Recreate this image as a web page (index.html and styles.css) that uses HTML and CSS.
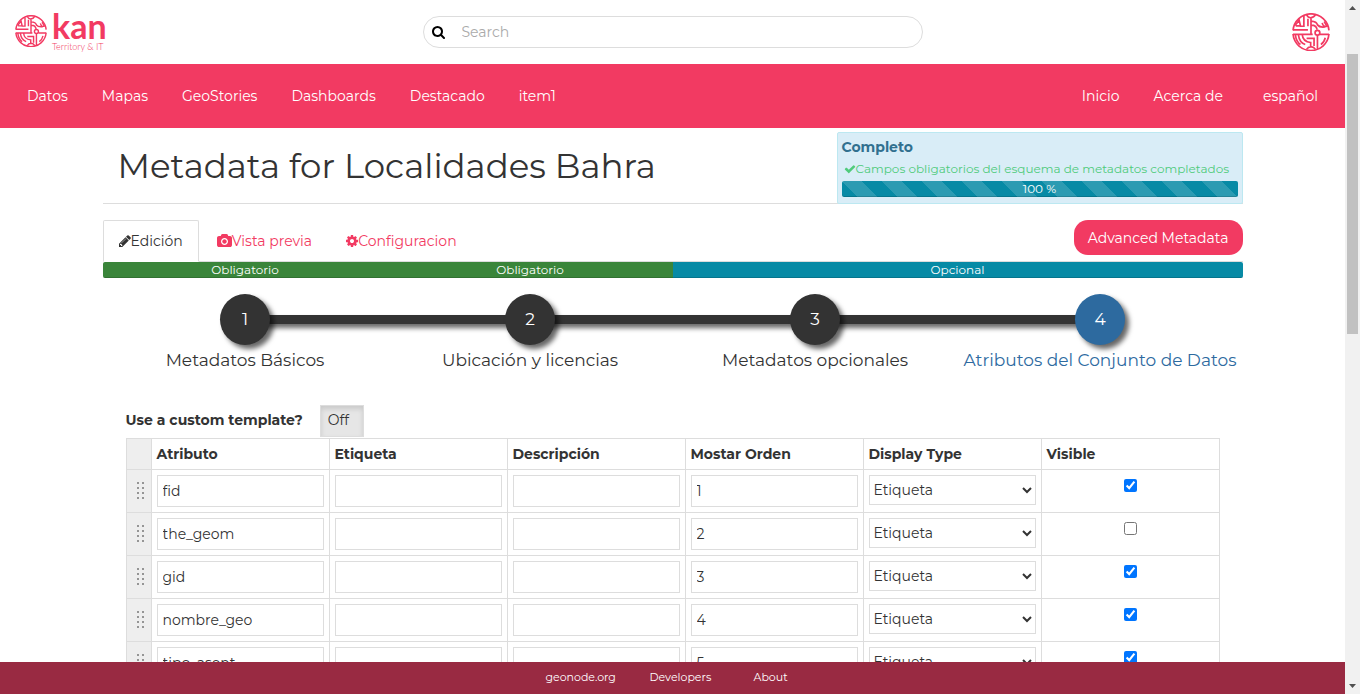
FILE: index.html
```html
<!DOCTYPE html>
<html lang="es">
<head>
<meta charset="utf-8">
<title>Metadata for Localidades Bahra</title>
<link rel="stylesheet" href="styles.css">
</head>
<body>
<svg class="defs" aria-hidden="true">
  <symbol id="emblem" viewBox="-1 -1 112 112">
    <g fill="none" stroke="currentColor" stroke-width="5">
      <path d="M2 50A53.200 53.200 0 0 1 108 50M2 61A53.200 53.200 0 0 0 108 61"/>
      <path d="M2 49H46M8 36L20 20L24 37H10M34 8V38H22M46 16V38"/>
      <path d="M42 4Q46 13 54 13Q64 12 68 4M55 13V30M55 23Q72 24 74 34Q80 42 96 40M55 30V62M55 35Q70 34 73 48M88 28Q91 42 102 38L94 24"/>
      <circle cx="74" cy="57" r="7"/>
      <path d="M81 62H108M74 64V106M2 62H60M29 62Q31 84 54 86V98M42 74H64V96M18 64Q21 86 38 92M9 64Q12 84 24 92M42 106Q46 99 55 98Q64 99 68 106M54 86V98M84 92Q94 86 97 72"/>
    </g>
  </symbol>
</svg>
<div class="page">
  <header class="topbar">
    <a class="brand" href="#" aria-label="kan Territory &amp; IT">
      <svg class="brand-mark"><use href="#emblem"/></svg>
      <span class="brand-text"><span class="brand-name">kan</span><span class="brand-sub">Territory &amp; IT</span></span>
    </a>
    <form class="search">
      <button type="button" class="search-btn" aria-label="Search"><svg class="icon" viewBox="0 0 1792 1792"><path d="M1152 832q0-185-131.5-316.5t-316.5-131.5-316.5 131.5-131.5 316.5 131.5 316.5 316.5 131.5 316.5-131.5 131.5-316.5zm512 832q0 52-38 90t-90 38q-54 0-90-38l-343-342q-179 124-399 124-143 0-273.5-55.5t-225-150-150-225-55.5-273.5 55.5-273.5 150-225 225-150 273.5-55.5 273.5 55.5 225 150 150 225 55.5 273.5q0 220-124 399l343 343q37 37 37 90z"/></svg></button>
      <input class="search-input" type="text" placeholder="Search" aria-label="Search">
    </form>
    <a class="avatar" href="#" aria-label="Perfil"><svg class="avatar-mark"><use href="#emblem"/></svg></a>
  </header>
  <nav class="menu">
    <div class="menu-group">
      <a href="#">Datos</a><a href="#">Mapas</a><a href="#">GeoStories</a><a href="#">Dashboards</a><a href="#">Destacado</a><a href="#">item1</a>
    </div>
    <div class="menu-group">
      <a href="#">Inicio</a><a href="#">Acerca de</a><a class="lang" href="#">español</a>
    </div>
  </nav>
  <main class="content">
    <div class="container">
      <div class="heading">
        <h1 class="title">Metadata for Localidades Bahra</h1>
        <section class="status">
          <strong class="status-title">Completo</strong>
          <p class="status-note"><svg class="icon icon-narrow" viewBox="121 0 1550 1792"><path d="M1671 566q0 40-28 68l-724 724-136 136q-28 28-68 28t-68-28l-136-136-362-362q-28-28-28-68t28-68l136-136q28-28 68-28t68 28l294 295 656-657q28-28 68-28t68 28l136 136q28 28 28 68z"/></svg>Campos obligatorios del esquema de metadatos completados</p>
          <div class="bar striped">100 %</div>
        </section>
      </div>
      <div class="tabs-row">
        <div class="tabs">
          <a class="tab active" href="#"><svg class="icon icon-narrow" viewBox="128 128 1536 1536"><path d="M491 1536l91-91-235-235-91 91v107h128v128h107zm523-928q0-22-22-22-10 0-17 7l-542 542q-7 7-7 17 0 22 22 22 10 0 17-7l542-542q7-7 7-17zm-54-192l416 416-832 832h-416v-416zm683 96q0 53-37 90l-166 166-416-416 166-165q36-38 90-38 53 0 91 38l235 234q37 39 37 91z"/></svg>Edición</a>
          <a class="tab" href="#"><svg class="icon icon-wide" viewBox="0 0 1920 1792"><path d="M960 672q119 0 203.5 84.5t84.5 203.5-84.5 203.5-203.5 84.5-203.5-84.5-84.5-203.5 84.5-203.5 203.5-84.5zm704-416q106 0 181 75t75 181v896q0 106-75 181t-181 75h-1408q-106 0-181-75t-75-181v-896q0-106 75-181t181-75h224l51-136q19-49 69.5-84.5t103.5-35.5h512q53 0 103.5 35.5t69.5 84.5l51 136h224zm-704 1152q185 0 316.5-131.5t131.5-316.5-131.5-316.5-316.5-131.5-316.5 131.5-131.5 316.5 131.5 316.5 316.5 131.5z"/></svg>Vista previa</a>
          <a class="tab" href="#"><svg class="icon icon-narrow" viewBox="128 128 1536 1536"><path d="M1152 896q0-106-75-181t-181-75-181 75-75 181 75 181 181 75 181-75 75-181zm512-109v222q0 12-8 23t-20 13l-185 28q-19 54-39 91 35 50 107 138 10 12 10 25t-9 23q-27 37-99 108t-94 71q-12 0-26-9l-138-108q-44 23-91 38-16 136-29 186-7 28-36 28h-222q-14 0-24.5-8.5t-11.5-21.5l-28-184q-49-16-90-37l-141 107q-10 9-25 9-14 0-25-11-126-114-165-168-7-10-7-23 0-12 8-23 15-21 51-66.5t54-70.5q-27-50-41-99l-183-27q-13-2-21-12.5t-8-23.5v-222q0-12 8-23t19-13l186-28q14-46 39-92-40-57-107-138-10-12-10-24 0-10 9-23 26-36 98.5-107.5t94.5-71.5q13 0 26 10l138 107q44-23 91-38 16-136 29-186 7-28 36-28h222q14 0 24.5 8.5t11.5 21.5l28 184q49 16 90 37l142-107q9-9 24-9 13 0 25 10 129 119 165 170 7 8 7 22 0 12-8 23-15 21-51 66.5t-54 70.5q26 50 41 98l183 28q13 2 21 12.5t8 23.5z"/></svg>Configuracion</a>
        </div>
        <button type="button" class="advanced">Advanced Metadata</button>
      </div>
      <div class="levels">
        <div class="bar required">Obligatorio</div><div class="bar required">Obligatorio</div><div class="bar optional">Opcional</div>
      </div>
      <ol class="steps">
        <li class="step"><a href="#"><span class="dot">1</span>Metadatos Básicos</a></li>
        <li class="step"><a href="#"><span class="dot">2</span>Ubicación y licencias</a></li>
        <li class="step"><a href="#"><span class="dot">3</span>Metadatos opcionales</a></li>
        <li class="step current"><a href="#"><span class="dot">4</span>Atributos del Conjunto de Datos</a></li>
      </ol>
      <section class="attributes">
        <div class="template"><span id="tpl">Use a custom template?</span><button type="button" class="toggle" aria-labelledby="tpl" aria-pressed="false">Off</button></div>
        <table class="grid">
          <thead><tr><th class="handle"></th><th>Atributo</th><th>Etiqueta</th><th>Descripción</th><th>Mostar Orden</th><th>Display Type</th><th>Visible</th></tr></thead>
          <tbody id="rows"></tbody>
        </table>
      </section>
    </div>
  </main>
  <footer class="footer"><a href="#">geonode.org</a><a href="#">Developers</a><a href="#">About</a></footer>
</div>
<div class="scroll" aria-hidden="true">
  <svg class="arrow" viewBox="0 0 15 17"><path d="M4 10h7L7.500 6z"/></svg>
  <div class="track"><div class="thumb"></div></div>
  <svg class="arrow" viewBox="0 0 15 17"><path d="M4 7h7l-3.500 4z"/></svg>
</div>
<script src="rows.js"></script>
</body>
</html>
```
FILE: styles.css
```css
* { box-sizing: border-box; }
body {
  margin: 0;
  height: 100vh;
  display: flex;
  overflow: hidden;
  font: 400 14px/20px Montserrat, Inter, sans-serif;
  color: #333;
  background: #fff;
}
a { color: inherit; text-decoration: none; }
button, input, select { font: inherit; color: inherit; }
.defs { position: absolute; width: 0; height: 0; }
.page { flex: 1; min-width: 0; display: flex; flex-direction: column; }
.icon { flex: none; width: 14px; height: 14px; fill: currentColor; }
.icon-wide { width: 15px; }
.icon-narrow { width: 12px; height: 12px; }

.topbar {
  flex: none;
  height: 64px;
  padding: 0 15px;
  display: grid;
  grid-template-columns: 1fr minmax(200px, 500px) 1fr;
  align-items: center;
}
.brand { display: flex; gap: 5px; align-items: center; color: #f23a62; }
.brand-mark { width: 32px; height: 32px; margin-bottom: 3px; }
.brand-text { display: flex; flex-direction: column; font-family: Lato, sans-serif; }
.brand-name { font-size: 34px; line-height: 30px; font-weight: 700; }
.brand-sub { font-size: 9px; line-height: 12px; font-weight: 300; }
.search {
  height: 32px;
  display: flex;
  align-items: center;
  border: 1px solid #ddd;
  border-radius: 16px;
}
.search-btn { display: flex; padding: 0 8px; border: 0; background: none; color: #000; }
.search-input {
  flex: 1;
  min-width: 0;
  padding: 0 8px;
  border: 0;
  outline: 0;
  background: none;
}
.search-input::placeholder { color: #aaa; }
.avatar { justify-self: end; display: flex; color: #f23a62; }
.avatar-mark { width: 38px; height: 38px; }

.menu {
  flex: none;
  height: 64px;
  padding: 0 27px;
  display: flex;
  justify-content: space-between;
  align-items: center;
  background: #f23a62;
  color: #fff;
}
.menu-group { display: flex; gap: 34px; }
.lang { margin-left: 6px; }

.content { flex: 1; min-height: 0; overflow: hidden; }
.container { max-width: 1140px; margin: 0 auto; }
.heading {
  padding-top: 4px;
  display: flex;
  justify-content: space-between;
  align-items: center;
  border-bottom: 1px solid #ddd;
}
.title {
  margin: 0 0 4px 15px;
  font-size: 34px;
  line-height: 40px;
  font-weight: 400;
}
.status {
  width: 406px;
  height: 72px;
  margin-bottom: -1px;
  padding: 4px;
  display: flex;
  flex-direction: column;
  border: 1px solid #bce8f1;
  border-radius: 2px;
  background: #d9edf7;
  color: #31708f;
}
.status-title { font-weight: 700; line-height: 20px; }
.status-note {
  margin: 0;
  padding-left: 2px;
  display: flex;
  align-items: center;
  white-space: nowrap;
  font-size: 12px;
  line-height: 24px;
  color: #4fcb7b;
}
.bar {
  height: 16px;
  font-size: 12px;
  line-height: 16px;
  text-align: center;
  color: #fff;
  box-shadow: inset 0 -1px 0 rgba(0, 0, 0, .15);
}
.striped {
  border-radius: 2px;
  background: #078aa5 linear-gradient(45deg, rgba(255,255,255,.15) 25%, transparent 25%, transparent 50%, rgba(255,255,255,.15) 50%, rgba(255,255,255,.15) 75%, transparent 75%) 0 0 / 40px 40px;
}

.tabs-row {
  margin-top: 16px;
  display: flex;
  justify-content: space-between;
  align-items: flex-start;
  border-bottom: 1px solid #ddd;
}
.tabs { display: flex; gap: 2px; margin-bottom: -1px; }
.tab {
  height: 42px;
  padding: 0 15px;
  display: flex;
  align-items: center;
  border: 1px solid transparent;
  color: #f23a62;
}
.tab.active {
  border-color: #ddd #ddd #fff;
  border-radius: 2px 2px 0 0;
  background: #fff;
  color: #333;
}
.advanced {
  height: 35px;
  padding: 0 14px;
  border: 0;
  border-radius: 14px;
  background: #f23a62;
  color: #fff;
}
.levels { display: grid; grid-template-columns: 1fr 1fr 2fr; border-radius: 2px; overflow: hidden; }
.required { background: #3a853a; }
.optional { background: #078aa5; }

.steps {
  margin: 16px 0 0;
  padding: 0;
  display: grid;
  grid-template-columns: repeat(4, 1fr);
  list-style: none;
}
.step { position: relative; font-size: 17px; line-height: 24px; text-align: center; }
.step a { display: flex; flex-direction: column; align-items: center; gap: 3px; white-space: nowrap; }
.step:not(:last-child)::before {
  content: "";
  position: absolute;
  top: 21px;
  left: 50%;
  width: 100%;
  height: 9px;
  background: #333;
  box-shadow: 3px 4px 5px rgba(0, 0, 0, .6);
}
.dot {
  position: relative;
  z-index: 1;
  width: 50px;
  height: 51px;
  border-radius: 50%;
  line-height: 51px;
  background: #333;
  color: #fff;
  box-shadow: 4px 4px 5px rgba(0, 0, 0, .6);
}
.current { color: #2d6a9f; }
.current .dot { background: #2d6a9f; }

.attributes { padding: 33px 23px 0; }
.template { display: flex; align-items: center; gap: 17px; font-weight: 700; margin-bottom: 1px; }
.template span { padding-bottom: 2px; }
.toggle {
  height: 32px;
  padding: 0 14px 2px 7px;
  border: 1px solid #ddd;
  background: #e6e6e6;
  box-shadow: inset 0 3px 5px rgba(0, 0, 0, .125);
  font-weight: 400;
}
.grid { width: 100%; table-layout: fixed; border-collapse: collapse; }
.grid th, .grid td { padding: 5px; border: 1px solid #ddd; text-align: left; vertical-align: top; }
.grid th { font-weight: 700; }
.grid .handle { width: 25px; background: #eee; vertical-align: middle; }
.grip { display: block; width: 9px; height: 18px; margin: 0 0 2px 4px; fill: #777; }
.field {
  display: block;
  width: 100%;
  height: 32px;
  padding: 0 5px;
  border: 1px solid #ddd;
  border-radius: 0;
  background: #fff;
}
select.field { height: 30px; padding: 0; }
.grid .visible { text-align: center; }
.check { display: block; width: 13px; height: 13px; margin: 4px auto; }

.footer {
  flex: none;
  height: 32px;
  padding: 0 12px 2px 0;
  display: flex;
  justify-content: center;
  align-items: center;
  background: #992a42;
  color: #fff;
  font-size: 11px;
}
.footer a { width: 104px; }
.footer a:last-child { width: 34px; }

.scroll { flex: none; width: 15px; display: flex; flex-direction: column; background: #f1f1f1; }
.arrow { flex: none; width: 15px; height: 17px; fill: #505050; }
.track { flex: 1; padding: 37px 2px 0; }
.thumb { width: 11px; height: 45%; background: #c1c1c1; }
```
FILE: rows.js
```js
const attributes = [
  ["fid", true],
  ["the_geom", false],
  ["gid", true],
  ["nombre_geo", true],
  ["tipo_asent", true],
];

const dots = [1, 6, 11, 16].map(y => `<rect x="1" y="${y}" width="2" height="2" rx="1"/><rect x="6" y="${y}" width="2" height="2" rx="1"/>`).join("");

document.getElementById("rows").innerHTML = attributes.map(([name, visible], i) => `
  <tr>
    <td class="handle"><svg class="grip" viewBox="0 0 9 18">${dots}</svg></td>
    <td><input class="field" type="text" value="${name}" aria-label="Atributo"></td>
    <td><input class="field" type="text" aria-label="Etiqueta"></td>
    <td><input class="field" type="text" aria-label="Descripción"></td>
    <td><input class="field" type="text" value="${i + 1}" aria-label="Mostar Orden"></td>
    <td><select class="field" aria-label="Display Type"><option>Etiqueta</option></select></td>
    <td class="visible"><input class="check" type="checkbox" aria-label="Visible"${visible ? " checked" : ""}></td>
  </tr>`).join("");
```
